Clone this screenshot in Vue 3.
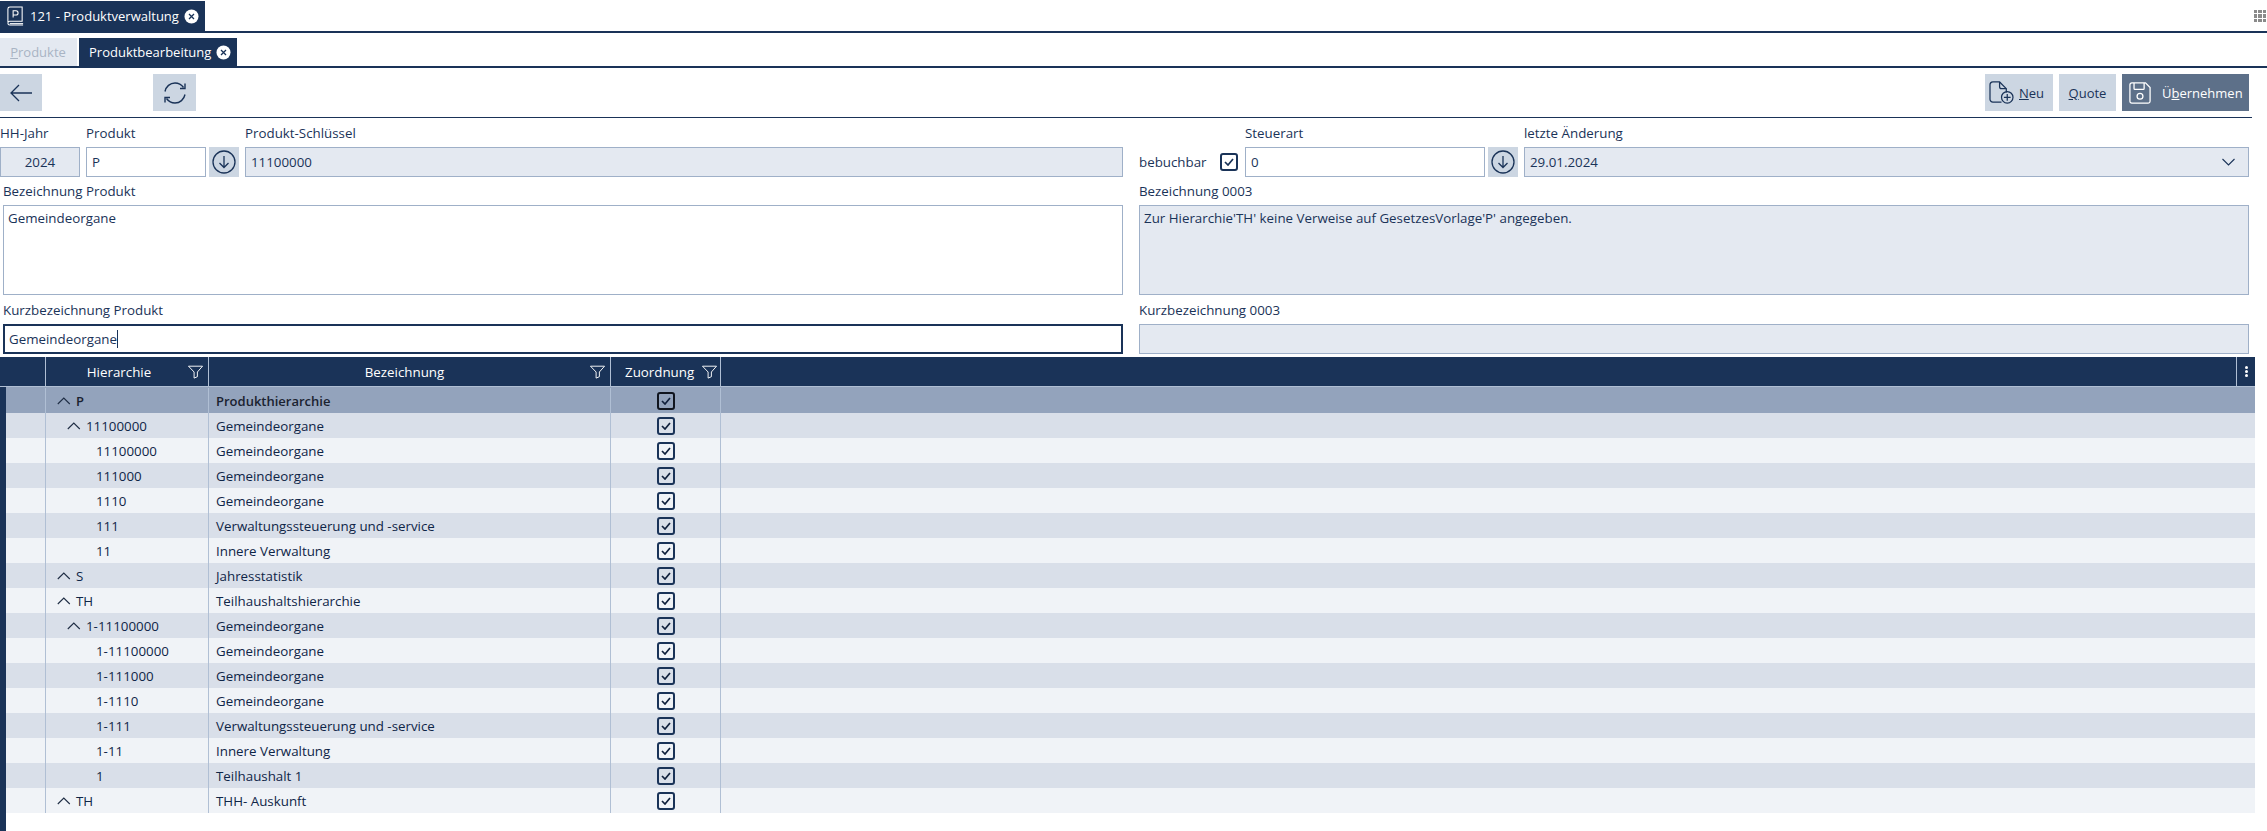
<script setup>
const rows = [
  { h: 'P', b: 'Produkthierarchie', lvl: 0, open: true, top: true },
  { h: '11100000', b: 'Gemeindeorgane', lvl: 1, open: true },
  { h: '11100000', b: 'Gemeindeorgane', lvl: 2 },
  { h: '111000', b: 'Gemeindeorgane', lvl: 2 },
  { h: '1110', b: 'Gemeindeorgane', lvl: 2 },
  { h: '111', b: 'Verwaltungssteuerung und -service', lvl: 2 },
  { h: '11', b: 'Innere Verwaltung', lvl: 2 },
  { h: 'S', b: 'Jahresstatistik', lvl: 0, open: true },
  { h: 'TH', b: 'Teilhaushaltshierarchie', lvl: 0, open: true },
  { h: '1-11100000', b: 'Gemeindeorgane', lvl: 1, open: true },
  { h: '1-11100000', b: 'Gemeindeorgane', lvl: 2 },
  { h: '1-111000', b: 'Gemeindeorgane', lvl: 2 },
  { h: '1-1110', b: 'Gemeindeorgane', lvl: 2 },
  { h: '1-111', b: 'Verwaltungssteuerung und -service', lvl: 2 },
  { h: '1-11', b: 'Innere Verwaltung', lvl: 2 },
  { h: '1', b: 'Teilhaushalt 1', lvl: 2 },
  { h: 'TH', b: 'THH- Auskunft', lvl: 0, open: true },
]
</script>

<template>
  <div class="app">
    <div class="tabbar top">
      <div class="tab main">
        <svg class="book" width="19" height="21" viewBox="0 0 20 22" fill="none" stroke="currentColor" stroke-width="1.1">
          <path d="M2 17V3a2 2 0 0 1 2-2h13v15H4a2 2 0 0 0-2 2 2 2 0 0 0 2 2h14" />
          <path d="M4 18.500h14" />
          <path d="M7.500 12V5h3a2 2 0 0 1 0 4.400h-3" />
        </svg>
        <span>121 - Produktverwaltung</span>
        <svg class="x" width="15" height="15" viewBox="0 0 15 15"><circle cx="7.500" cy="7.500" r="7" fill="#fff" /><path d="M5 5l5 5M10 5l-5 5" stroke="#1a3358" stroke-width="1.300" /></svg>
      </div>
      <div class="apps"><i v-for="n in 9" :key="n"></i></div>
    </div>
    <div class="tabbar second">
      <div class="tab off"><span><u>P</u>rodukte</span></div>
      <div class="tab on">
        <span>Produktbearbeitung</span>
        <svg class="x" width="15" height="15" viewBox="0 0 15 15"><circle cx="7.500" cy="7.500" r="7" fill="#fff" /><path d="M5 5l5 5M10 5l-5 5" stroke="#1a3358" stroke-width="1.300" /></svg>
      </div>
    </div>

    <div class="toolbar">
      <button class="btn back">
        <svg width="24" height="20" viewBox="0 0 24 20" fill="none" stroke="#1a3358" stroke-width="1.300"><path d="M23 10H2M10 2l-8 8 8 8" /></svg>
      </button>
      <button class="btn refresh">
        <svg width="24" height="24" viewBox="0 0 24 24" fill="none" stroke="#1a3358" stroke-width="1.400"><path d="M2 10.500C3 5.500 7 2 12 2c3.500 0 6.500 1.700 8.500 4.500" /><path d="M22 2.500v5h-5" /><path d="M22 13.500C21 18.500 17 22 12 22c-3.500 0-6.500-1.700-8.500-4.500" /><path d="M2 21.500v-5h5" /></svg>
      </button>
      <div class="spacer"></div>
      <button class="btn neu">
        <svg width="25" height="23" viewBox="0 0 26 24" fill="none" stroke="#1a3358" stroke-width="1.300"><path d="M13 22H4a3 3 0 0 1-3-3V4a3 3 0 0 1 3-3h7l7 7v4" /><path d="M11 1v5a2 2 0 0 0 2 2h5" /><circle cx="19" cy="17" r="6" /><path d="M19 13.500v7M15.500 17h7" /></svg>
        <span><u>N</u>eu</span>
      </button>
      <button class="btn quote"><span><u>Q</u>uote</span></button>
      <button class="btn save">
        <svg width="22" height="22" viewBox="0 0 24 24" fill="none" stroke="#fff" stroke-width="1.400"><path d="M3 1h15l5 5v15a2 2 0 0 1-2 2H3a2 2 0 0 1-2-2V3a2 2 0 0 1 2-2z" /><path d="M5.500 1v6a1 1 0 0 0 1 1h9a1 1 0 0 0 1-1V1" /><circle cx="12" cy="15.500" r="3.200" /></svg>
        <span>Ü<u>b</u>ernehmen</span>
      </button>
    </div>
    <div class="rule"></div>

    <div class="form">
      <div class="left-top">
        <label class="f jahr"><span class="lab">HH-Jahr</span><div class="inp ro center">2024</div></label>
        <label class="f prod"><span class="lab">Produkt</span><div class="inp">P</div></label>
        <button class="btn pick">
          <svg width="24" height="24" viewBox="0 0 24 24" fill="none" stroke="#1a3358" stroke-width="1.300"><circle cx="12" cy="12" r="11" /><path d="M12 6v11.500M7.500 13l4.500 4.500 4.500-4.500" /></svg>
        </button>
        <label class="f key"><span class="lab">Produkt-Schlüssel</span><div class="inp ro">11100000</div></label>
      </div>
      <div class="right-top">
        <div class="bebuchbar">
          <span>bebuchbar</span>
          <span class="chk form-chk"><svg width="10" height="8" viewBox="0 0 10 8" fill="none" stroke="#1a3358" stroke-width="1.700"><path d="M1 4l3 3 5-6" /></svg></span>
        </div>
        <label class="f steuer"><span class="lab">Steuerart</span><div class="inp">0</div></label>
        <button class="btn pick">
          <svg width="24" height="24" viewBox="0 0 24 24" fill="none" stroke="#1a3358" stroke-width="1.300"><circle cx="12" cy="12" r="11" /><path d="M12 6v11.500M7.500 13l4.500 4.500 4.500-4.500" /></svg>
        </button>
        <label class="f aend"><span class="lab">letzte Änderung</span>
          <div class="inp ro sel">29.01.2024
            <svg width="13" height="8" viewBox="0 0 13 8" fill="none" stroke="#1a3358" stroke-width="1.100"><path d="M.5 1l6 6 6-6" /></svg>
          </div>
        </label>
      </div>
      <div class="col">
        <span class="lab">Bezeichnung Produkt</span>
        <div class="area">Gemeindeorgane</div>
        <span class="lab l2">Kurzbezeichnung Produkt</span>
        <div class="inp focus">Gemeindeorgane<i class="caret"></i></div>
      </div>
      <div class="col">
        <span class="lab">Bezeichnung 0003</span>
        <div class="area ro">Zur Hierarchie'TH' keine Verweise auf GesetzesVorlage'P' angegeben.</div>
        <span class="lab l2">Kurzbezeichnung 0003</span>
        <div class="inp ro"></div>
      </div>
    </div>

    <div class="grid">
      <div class="row head">
        <div class="c c0"></div>
        <div class="c c1"><span>Hierarchie</span><svg class="fil" width="15" height="14" viewBox="0 0 16 14" fill="none" stroke="#fff"><path d="M.5.800h15L10 7v5l-3.500 1.500V7z" /></svg></div>
        <div class="c c2"><span>Bezeichnung</span><svg class="fil" width="15" height="14" viewBox="0 0 16 14" fill="none" stroke="#fff"><path d="M.5.800h15L10 7v5l-3.500 1.500V7z" /></svg></div>
        <div class="c c3"><span>Zuordnung</span><svg class="fil" width="15" height="14" viewBox="0 0 16 14" fill="none" stroke="#fff"><path d="M.5.800h15L10 7v5l-3.500 1.500V7z" /></svg></div>
        <div class="c c4"></div>
        <div class="c c5"><b></b><b></b><b></b></div>
      </div>
      <div v-for="(r, i) in rows" :key="i" class="row body" :class="{ top: r.top, alt: i % 2 === 1 }">
        <div class="c c0"></div>
        <div class="c c1" :class="'lv' + r.lvl">
          <svg v-if="r.open" class="chev" width="14" height="8" viewBox="0 0 14 8" fill="none" stroke="#1f2d44" stroke-width="1.100"><path d="M.8 7l6-6 6 6" /></svg>
          <span>{{ r.h }}</span>
        </div>
        <div class="c c2">{{ r.b }}</div>
        <div class="c c3">
          <span class="chk" :class="{ blk: r.top }"><svg width="10" height="8" viewBox="0 0 10 8" fill="none" stroke="#10203c" stroke-width="1.700"><path d="M1 4l3 3 5-6" /></svg></span>
        </div>
        <div class="c c4"></div>
      </div>
    </div>
  </div>
</template>

<style>
html, body { margin: 0; background: #fff; overflow: hidden; }
</style>

<style scoped>
.app {
  width: 2267px;
  height: 831px;
  display: flex;
  flex-direction: column;
  font-family: "Open Sans", sans-serif;
  font-size: 13px;
  color: #1a3358;
  background: #fff;
  overflow: hidden;
}
.tabbar {
  display: flex;
  align-items: flex-end;
  border-bottom: 2px solid #1a3358;
  flex: none;
  position: relative;
}
.top { padding-top: 1px; height: 30px; }
.second { height: 28px; margin-top: 5px; gap: 2px; }
.tab { display: flex; align-items: center; height: 100%; box-sizing: border-box; }
.main { width: 205px; background: #1a3358; color: #fff; padding-left: 6px; gap: 5px; }
.off { width: 77px; background: #e4e9f1; color: #a9b4c4; justify-content: center; padding-right: 1px; }
.on { width: 158px; background: #1a3358; color: #fff; padding-left: 10px; gap: 5px; }
.apps {
  position: absolute;
  right: 1px;
  top: 10px;
  display: grid;
  grid-template-columns: repeat(3, 3.400px);
  grid-auto-rows: 3.400px;
  gap: 1px;
}
.apps i { background: #8a8a8a; }
.toolbar {
  display: flex;
  height: 37px;
  margin-top: 6px;
  padding-right: 18px;
  flex: none;
}
.spacer { flex: 1; }
.btn {
  border: 0;
  padding: 0;
  margin: 0;
  background: #ccd6e2;
  color: #1a3358;
  font: inherit;
  display: flex;
  align-items: center;
  justify-content: center;
  flex: none;
}
.back { width: 42px; }
.refresh { width: 43px; margin-left: 111px; }
.neu { width: 68px; gap: 5px; padding-left: 4px; box-sizing: border-box; justify-content: flex-start; }
.quote { width: 57px; margin-left: 6px; }
.save { width: 127px; margin-left: 6px; background: #5d7089; color: #fff; justify-content: flex-start; padding-left: 7px; gap: 11px; box-sizing: border-box; }
.rule { height: 1px; width: 2252px; background: #1a3358; margin-top: 6px; flex: none; }

.form {
  display: grid;
  grid-template-columns: 1123px 1110px;
  column-gap: 16px;
  padding-right: 18px;
  flex: none;
  font-size: 13.330px;
}
.left-top, .right-top { display: flex; align-items: flex-end; height: 59px; }
.f { display: flex; flex-direction: column; }
.lab { height: 14px; line-height: 14px; margin-bottom: 7px; display: block; white-space: nowrap; }
.inp {
  height: 30px;
  box-sizing: border-box;
  border: 1px solid #9fb0c8;
  background: #fff;
  padding: 0 5px;
  display: flex;
  align-items: center;
  color: #1a3358;
}
.ro { background: #e4e9f1; }
.center { justify-content: center; }
.jahr { width: 80px; }
.prod { width: 120px; margin-left: 6px; }
.pick { width: 30px; height: 30px; margin-left: 3px; }
.key { width: 878px; margin-left: 6px; }
.bebuchbar { width: 106px; height: 30px; display: flex; align-items: center; justify-content: space-between; padding-right: 7px; box-sizing: border-box; color: #1a3358; }
.steuer { width: 240px; }
.aend { width: 725px; margin-left: 6px; }
.sel { justify-content: space-between; padding-right: 13px; }
.col { padding-left: 3px; padding-top: 7px; display: flex; flex-direction: column; }
.col + .col { padding-left: 0; }
.area {
  height: 90px;
  box-sizing: border-box;
  border: 1px solid #9fb0c8;
  background: #fff;
  padding: 3px 4px;
  line-height: 18px;
}
.area.ro { background: #e4e9f1; }
.l2 { margin-top: 8px; margin-bottom: 7px; }
.focus { border: 2px solid #1a3358; padding: 0 4px; color: #1a3358; }
.caret { width: 1px; height: 18px; background: #1a3358; display: inline-block; }

.grid {
  margin-top: 3px;
  width: 2255px;
  border-left: 6px solid #1a3358;
  box-sizing: border-box;
  flex: 1;
  font-size: 13.330px;
}
.row { display: flex; height: 25px; }
.head { background: #1a3358; color: #fff; margin-left: -6px; padding-left: 6px; width: 2255px; border-bottom: 1px solid #b0bfd4; box-sizing: border-box; height: 30px; }
.body { background: #f0f3f7; color: #0f2547; }
.body.alt { background: #d9dfe9; }
.body.top { background: #93a3bc; color: #1a2230; font-weight: 600; font-size: 13px; }
.c {
  box-sizing: border-box;
  display: flex;
  align-items: center;
  border-right: 1px solid #b0bfd4;
  position: relative;
  flex: none;
}
.c0 { width: 40px; }
.c1 { width: 163px; }
.c2 { width: 402px; padding-left: 7px; }
.c3 { width: 110px; justify-content: center; }
.c4 { flex: 1; border-right: 0; }
.head .c4 { flex: none; width: 1516px; border-right: 1px solid #b0bfd4; }
.c5 { width: 18px; border: 0; flex-direction: column; justify-content: center; gap: 1px; }
.c5 b { width: 3px; height: 3px; background: #fff; border-radius: 50%; }
.head .c { height: 29px; justify-content: center; }
.head .c1 span { margin-right: 16px; }
.head .c2 { padding-left: 0; }
.head .c2 span { margin-right: 10px; }
.head .c3 { justify-content: flex-start; padding-left: 14px; gap: 8px; }
.head .c1 .fil, .head .c2 .fil { position: absolute; right: 5px; top: 8px; }
.lv0 { padding-left: 11px; gap: 5px; }
.lv1 { padding-left: 21px; gap: 5px; }
.lv2 { padding-left: 50px; }
.chk {
  width: 18px;
  height: 18px;
  box-sizing: border-box;
  border: 2px solid #1a3358;
  border-radius: 3px;
  display: flex;
  align-items: center;
  justify-content: center;
}
.chk.blk { border-color: #10151f; }
.form-chk { width: 18px; height: 18px; }
</style>
